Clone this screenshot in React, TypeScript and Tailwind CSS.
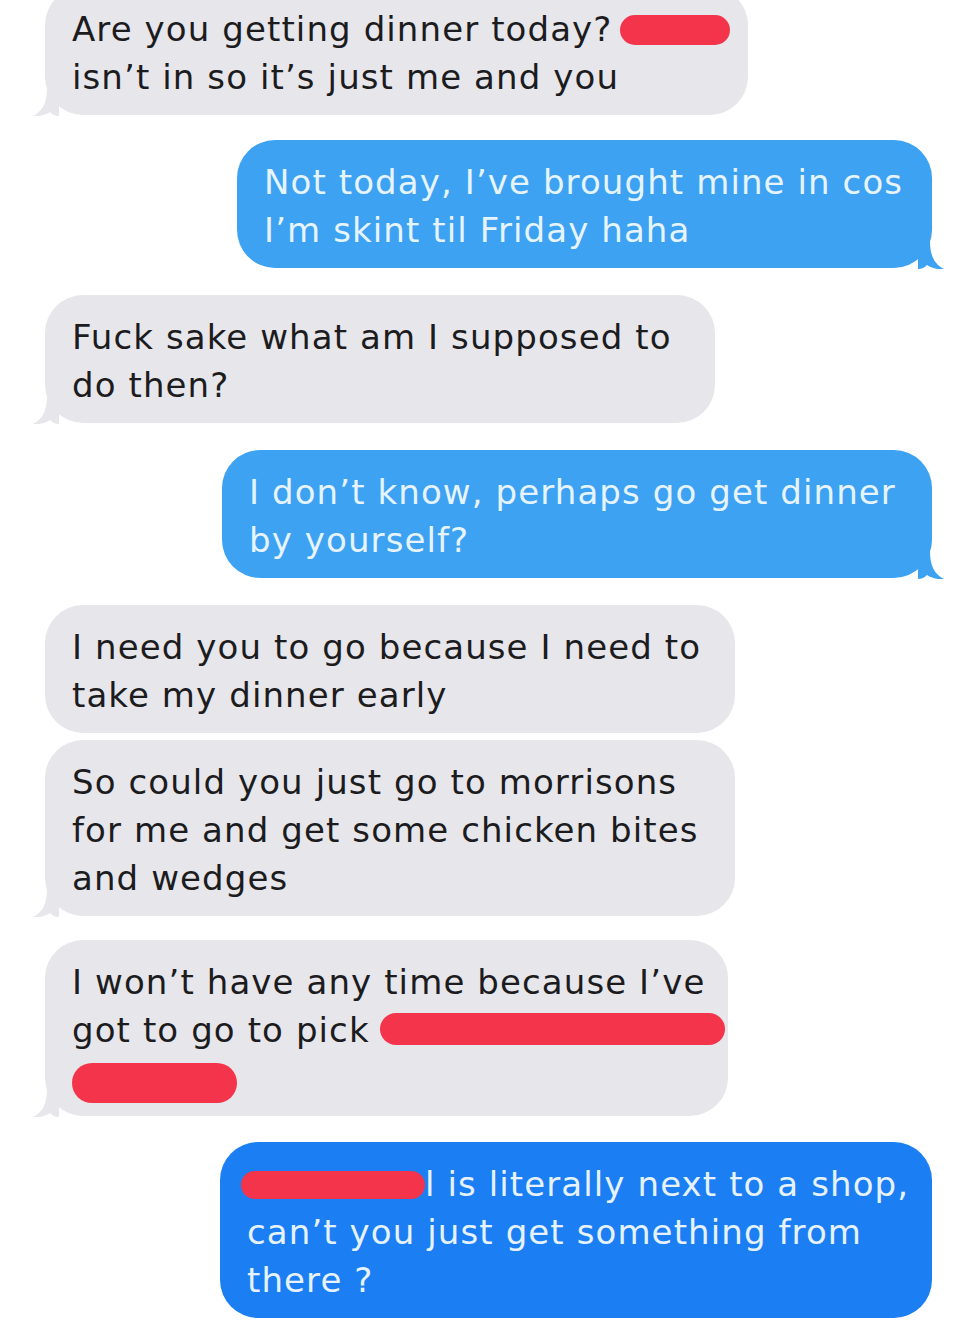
import React from "react";

type Msg = {
  side: "in" | "out";
  lines: React.ReactNode[];
  width: string;
  tone?: "light" | "deep";
  tail?: boolean;
  gap: string;
};

const Redact = ({ className }: { className: string }) => (
  <span className={`inline-block align-middle rounded-full bg-[#f3344b] ${className}`} />
);

const messages: Msg[] = [
  {
    side: "in",
    width: "w-[703px]",
    gap: "-mt-[13px]",
    tail: true,
    lines: [
      <>
        Are you getting dinner today? <Redact className="h-[30px] w-[110px] -translate-y-[2px] -ml-[4px]" />
      </>,
      "isn\u2019t in so it\u2019s just me and you",
    ],
  },
  {
    side: "out",
    width: "w-[695px]",
    gap: "mt-[25px]",
    tone: "light",
    tail: true,
    lines: ["Not today, I\u2019ve brought mine in cos", "I\u2019m skint til Friday haha"],
  },
  {
    side: "in",
    width: "w-[670px]",
    gap: "mt-[27px]",
    tail: true,
    lines: ["Fuck sake what am I supposed to", "do then?"],
  },
  {
    side: "out",
    width: "w-[710px]",
    gap: "mt-[27px]",
    tone: "light",
    tail: true,
    lines: ["I don\u2019t know, perhaps go get dinner", "by yourself?"],
  },
  {
    side: "in",
    width: "w-[690px]",
    gap: "mt-[27px]",
    lines: ["I need you to go because I need to", "take my dinner early"],
  },
  {
    side: "in",
    width: "w-[690px]",
    gap: "mt-[7px]",
    tail: true,
    lines: ["So could you just go to morrisons", "for me and get some chicken bites", "and wedges"],
  },
  {
    side: "in",
    width: "w-[683px]",
    gap: "mt-[24px]",
    tail: true,
    lines: [
      "I won\u2019t have any time because I\u2019ve",
      <>
        got to go to pick <Redact className="h-[32px] w-[345px] -translate-y-[4px] -ml-[2px]" />
      </>,
      <Redact className="h-[40px] w-[165px] translate-y-[2px]" />,
    ],
  },
  {
    side: "out",
    width: "w-[712px]",
    gap: "mt-[26px]",
    tone: "deep",
    lines: [
      <>
        <Redact className="h-[28px] w-[184px] -translate-y-[2px] -ml-[6px]" />l is literally next to a shop,
      </>,
      "can\u2019t you just get something from",
      "there ?",
    ],
  },
];

function Tail({ side, color }: { side: "in" | "out"; color: string }) {
  if (side === "in") {
    return (
      <svg className="absolute -left-[12px] -bottom-[1px]" width="26" height="28" viewBox="0 0 26 28">
        <path d="M26 0 H14 C14 14 10 23 0 28 C8 29 14 26 17 24 C20 27 23 28 26 28 Z" fill={color} />
      </svg>
    );
  }
  return (
    <svg className="absolute -right-[12px] -bottom-[1px]" width="26" height="28" viewBox="0 0 26 28">
      <path d="M0 0 H12 C12 14 16 23 26 28 C18 29 12 26 9 24 C6 27 3 28 0 28 Z" fill={color} />
    </svg>
  );
}

function Bubble({ m }: { m: Msg }) {
  const isIn = m.side === "in";
  const bg = isIn ? "#e6e6eb" : m.tone === "deep" ? "#1b7ff3" : "#3ea2f2";
  return (
    <div className={`flex ${isIn ? "justify-start pl-[45px]" : "justify-end pr-[48px]"} ${m.gap}`}>
      <div
        className={`relative ${m.width} rounded-[38px] px-[27px] pt-[18px] pb-[14px] text-[34px] leading-[48px] tracking-[1.1px] ${
          isIn ? "bg-[#e6e6eb] text-[#1c1c1e]" : m.tone === "deep" ? "bg-[#1b7ff3] text-[#e6f2ff]" : "bg-[#3ea2f2] text-[#e6f4ff]"
        }`}
      >
        {m.tail && <Tail side={m.side} color={bg} />}
        <div className="relative">
          {m.lines.map((l, i) => (
            <div key={i} className="whitespace-nowrap">
              {l}
            </div>
          ))}
        </div>
      </div>
    </div>
  );
}

export default function App() {
  return (
    <div
      className="h-[1323px] w-[980px] overflow-hidden bg-white"
      style={{ fontFamily: '"DejaVu Sans", "Liberation Sans", Arial, sans-serif' }}
    >
      <div className="flex flex-col">
        {messages.map((m, i) => (
          <Bubble key={i} m={m} />
        ))}
      </div>
    </div>
  );
}
